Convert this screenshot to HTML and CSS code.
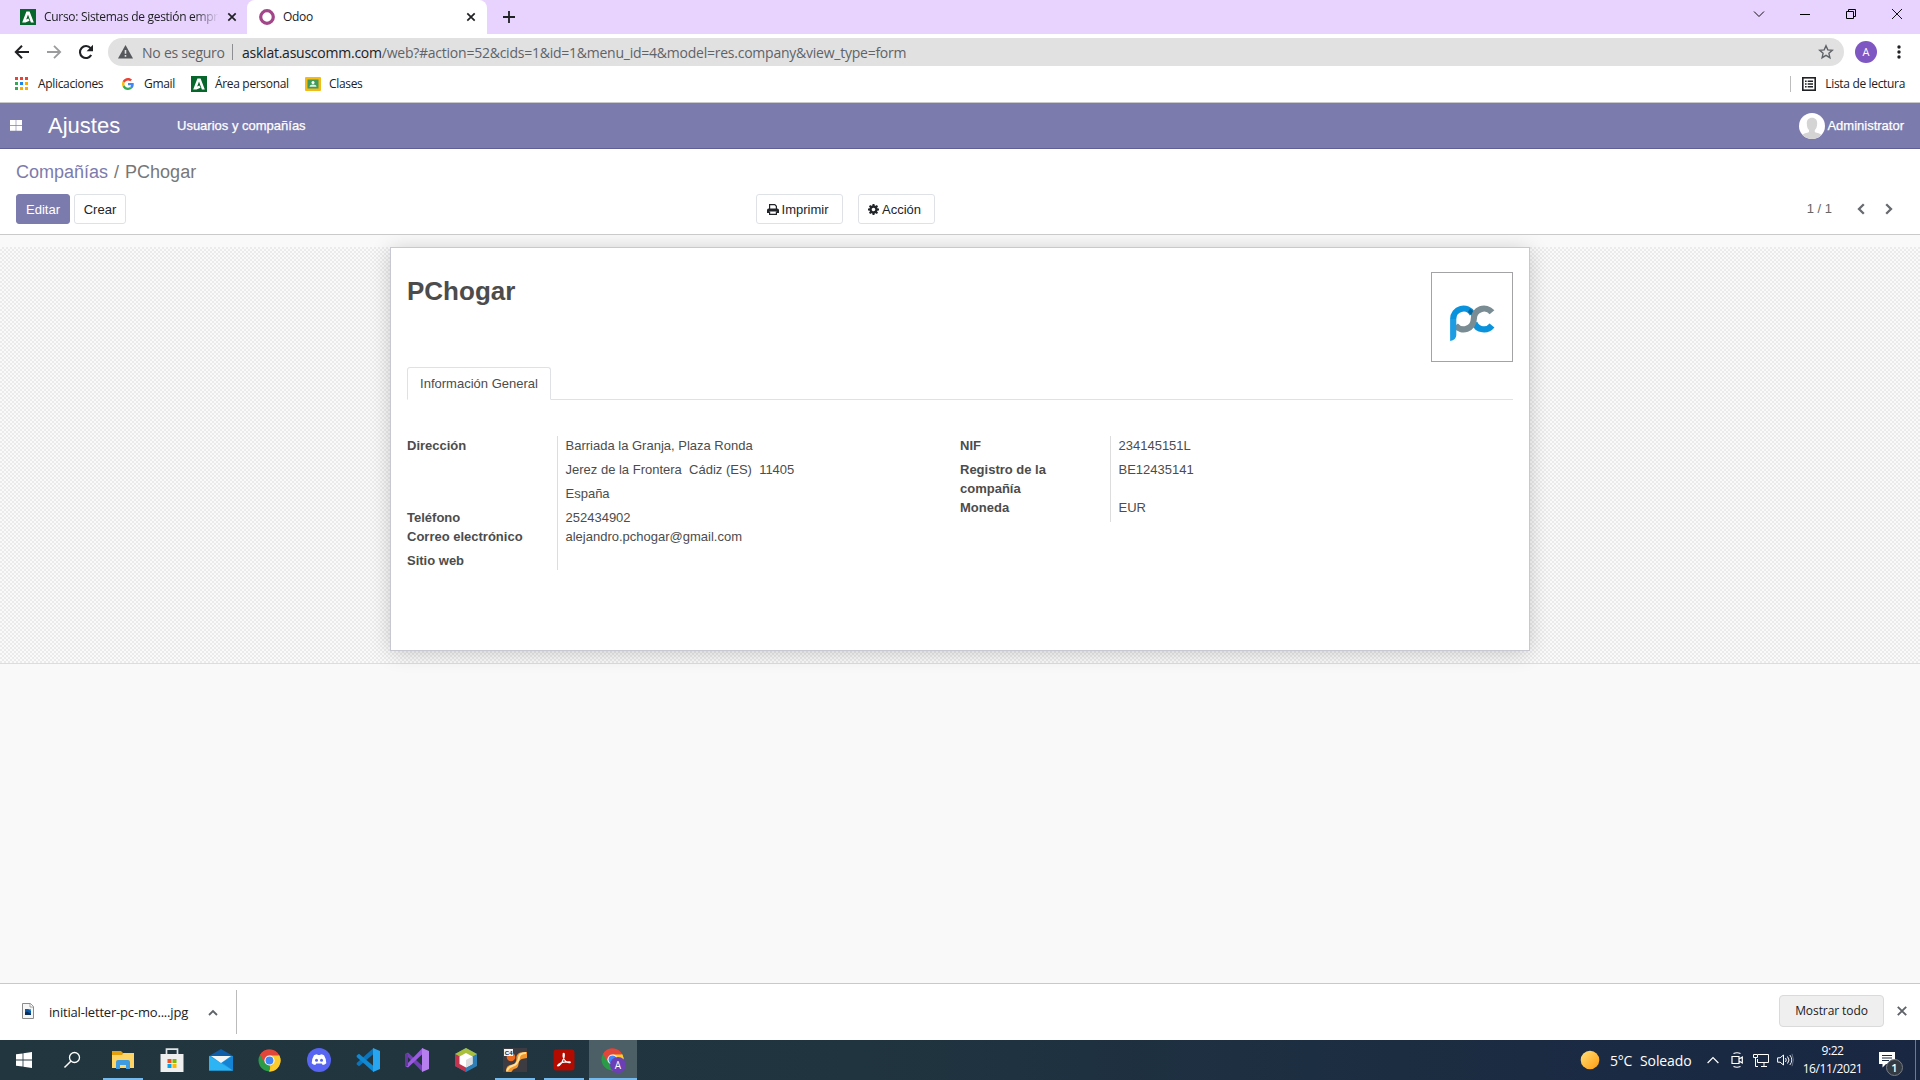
FILE: index.html
```html
<!DOCTYPE html>
<html lang="es">
<head>
<meta charset="utf-8">
<title>Odoo</title>
<link rel="stylesheet" href="styles.css">
</head>
<body>
<svg class="defs" width="0" height="0" aria-hidden="true">
  <defs>
    <symbol id="junta" viewBox="0 0 16 16"><rect width="16" height="16" fill="#07662b"/><path d="M2.2 13.4L6.4 2.6h3.2l4.2 10.8h-2.9L8 5.6l-1.8 4.9 2.1-.9 1.2 2.1-4 1.7z" fill="#fff"/></symbol>
    <symbol id="chrome" viewBox="0 0 48 48"><path d="M24 24L4.1 12.5A23 23 0 0 1 43.9 12.5z" fill="#e33b2e"/><path d="M24 24L43.9 12.5A23 23 0 0 1 24 47z" fill="#fbc116"/><path d="M24 24v23A23 23 0 0 1 4.1 12.5z" fill="#2a9c48"/><path d="M24 13.5h20.4A23 23 0 0 0 4.1 12.5l10.8 17z" fill="#e0463a"/><path d="M33.1 29.2L22.5 47A23 23 0 0 0 44.4 13.5H24z" fill="#fccb2e"/><circle cx="24" cy="24" r="10.6" fill="#fff"/><circle cx="24" cy="24" r="8.3" fill="#4285f4"/></symbol>
    <linearGradient id="sun" x1="0" y1="0" x2="1" y2="1"><stop offset="0" stop-color="#ffe27a"/><stop offset="1" stop-color="#ff9a0c"/></linearGradient>
  </defs>
</svg>
<div class="screen">
  <header class="tabstrip">
    <div class="tab tab-back">
      <svg width="16" height="16"><use href="#junta"/></svg>
      <span class="tab-title fade">Curso: Sistemas de gestión empre</span>
      <svg class="tab-x" width="10" height="10" viewBox="0 0 10 10"><path d="M1.3 1.3l7.4 7.4M8.7 1.3L1.3 8.7" stroke="#202124" stroke-width="1.7"/></svg>
    </div>
    <div class="tab tab-front">
      <svg width="16" height="16" viewBox="0 0 16 16"><circle cx="8" cy="8" r="6.3" fill="none" stroke="#a24689" stroke-width="3.2"/></svg>
      <span class="tab-title">Odoo</span>
      <svg class="tab-x" width="10" height="10" viewBox="0 0 10 10"><path d="M1.3 1.3l7.4 7.4M8.7 1.3L1.3 8.7" stroke="#202124" stroke-width="1.7"/></svg>
    </div>
    <svg class="newtab" width="12" height="12" viewBox="0 0 12 12"><path d="M6 0v12M0 6h12" stroke="#202124" stroke-width="1.8"/></svg>
    <div class="winbtns">
      <svg width="12" height="12" viewBox="0 0 12 12"><path d="M1 3.5l5 5 5-5" fill="none" stroke="#111" stroke-width="1"/></svg>
      <svg width="12" height="12" viewBox="0 0 12 12"><path d="M1 6.5h10" stroke="#000"/></svg>
      <svg width="12" height="12" viewBox="0 0 12 12"><path d="M1.5 3.5h7v7h-7zM3.5 3.5v-2h7v7h-2" fill="none" stroke="#000"/></svg>
      <svg width="12" height="12" viewBox="0 0 12 12"><path d="M1 1l10 10M11 1L1 11" stroke="#111"/></svg>
    </div>
  </header>

  <div class="toolbar">
    <svg width="16" height="16" viewBox="0 0 16 16"><path d="M15 8H2.5M8 1.8L1.8 8 8 14.2" fill="none" stroke="#202124" stroke-width="2"/></svg>
    <svg width="16" height="16" viewBox="0 0 16 16"><path d="M1 8h12.5M8 1.8L14.2 8 8 14.2" fill="none" stroke="#9b9c9e" stroke-width="1.8"/></svg>
    <svg width="16" height="16" viewBox="0 0 16 16"><path d="M13.2 11A6 6 0 1 1 12.6 4.2" fill="none" stroke="#202124" stroke-width="2.1"/><path d="M15 .8v6.4H8.6z" fill="#202124"/></svg>
    <div class="omnibox">
      <svg width="15" height="14" viewBox="0 0 15 14"><path d="M7.5 0L15 13.5H0z" fill="#55585c"/><path d="M7.5 5v3.8M7.5 10v1.8" stroke="#e1e1e1" stroke-width="1.6"/></svg>
      <span class="insecure">No es seguro</span>
      <i class="omni-sep"></i>
      <span class="url"><b>asklat.asuscomm.com</b>/web?#action=52&amp;cids=1&amp;id=1&amp;menu_id=4&amp;model=res.company&amp;view_type=form</span>
      <svg class="star" width="16" height="16" viewBox="0 0 16 16"><path d="M8 1.8l1.8 4.1 4.5.4-3.4 3 1 4.4L8 11.400l-3.900 2.300 1-4.400-3.400-3 4.500-.4z" fill="none" stroke="#5f6368" stroke-width="1.4"/></svg>
    </div>
    <span class="avatar">A</span>
    <svg class="kebab" width="4" height="14" viewBox="0 0 4 14"><g fill="#202124"><circle cx="2" cy="2" r="1.7"/><circle cx="2" cy="7" r="1.7"/><circle cx="2" cy="12" r="1.7"/></g></svg>
  </div>

  <nav class="bookmarks">
    <svg class="bm1" width="13" height="13" viewBox="0 0 13 13"><path d="M0 0h3v3H0zM5 0h3v3H5zM10 0h3v3h-3z" fill="#ea4335"/><path d="M0 5h3v3H0zM0 10h3v3H0z" fill="#34a853"/><path d="M5 5h3v3H5z" fill="#1a86e8"/><path d="M10 5h3v3h-3zM5 10h3v3H5zM10 10h3v3h-3z" fill="#f9ab00"/></svg>
    <span class="t-apps">Aplicaciones</span>
    <svg class="bm2" width="12" height="12" viewBox="0 0 48 48"><path fill="#EA4335" d="M24 9.500c3.500 0 6.700 1.200 9.200 3.600l6.900-6.900C35.900 2.400 30.500 0 24 0 14.600 0 6.500 5.400 2.600 13.200l8 6.200C12.400 13.700 17.700 9.500 24 9.500z"/><path fill="#4285F4" d="M47 24.600c0-1.600-.2-3.100-.4-4.600H24v9h12.900c-.6 3-2.200 5.500-4.700 7.200l7.700 6C44.400 38 47 31.800 47 24.600z"/><path fill="#FBBC05" d="M10.500 28.600c-.5-1.500-.8-3-.8-4.600s.3-3.100.8-4.600l-8-6.200C.9 16.500 0 20.100 0 24s.9 7.500 2.600 10.800z"/><path fill="#34A853" d="M24 48c6.500 0 11.900-2.100 15.900-5.800l-7.700-6c-2.200 1.500-4.900 2.300-8.200 2.300-6.300 0-11.600-4.200-13.500-9.900l-8 6.200C6.500 42.600 14.600 48 24 48z"/></svg>
    <span class="t-gmail">Gmail</span>
    <svg class="bm3" width="16" height="16"><use href="#junta"/></svg>
    <span class="t-area">Área personal</span>
    <svg class="bm4" width="16" height="14" viewBox="0 0 16 14"><rect width="16" height="14" rx="1" fill="#f5ba15"/><rect x="2.500" y="2.500" width="11" height="9" fill="#3f9a5c"/><circle cx="8" cy="5.500" r="1.500" fill="#fff"/><path d="M4.500 9.800c0-3.200 7-3.200 7 0z" fill="#e5f3ea"/></svg>
    <span class="t-clases">Clases</span>
    <div class="reading">
      <svg width="14" height="14" viewBox="0 0 14 14"><rect x=".8" y=".8" width="12.400" height="12.400" fill="none" stroke="#202124" stroke-width="1.600"/><path d="M3 4.200h1.600M3 7h1.600M3 9.800h1.600M5.700 4.200H11M5.700 7H11M5.700 9.800H11" stroke="#202124" stroke-width="1.400"/></svg>
      <span class="t-lista">Lista de lectura</span>
    </div>
  </nav>

  <nav class="odoo-nav">
    <svg width="12" height="11" viewBox="0 0 12 11"><path d="M0 0h5.700v5H0zM6.300 0H12v5H6.300zM0 5.700h5.700v5H0zM6.300 5.700H12v5H6.300z" fill="#fff"/></svg>
    <span class="brand">Ajustes</span>
    <span class="menu">Usuarios y compañías</span>
    <div class="user">
      <svg width="26" height="26" viewBox="0 0 26 26"><clipPath id="uc"><circle cx="13" cy="13" r="13"/></clipPath><g clip-path="url(#uc)"><rect width="26" height="26" fill="#fff"/><path d="M13 4.800c3.400 0 5.200 2.200 5.200 5.600 0 3-1 5.200-2.400 6.600v2c2 1.200 6 1 7 4v3H3v-3c1-3 5-2.800 7-4v-2C8.600 15.600 7.800 13.400 7.800 10.400c0-3.400 1.800-5.600 5.200-5.600z" fill="#d4d4d4"/></g></svg>
      <span>Administrator</span>
    </div>
  </nav>

  <section class="control">
    <div class="crumbs"><a>Compañías</a> <span class="slash">/</span> PChogar</div>
    <div class="actions">
      <button class="btn primary">Editar</button>
      <button class="btn create">Crear</button>
      <button class="btn print"><svg width="12" height="11" viewBox="0 0 12 11"><path d="M2.600 5V.7h5.200l1.600 1.600V5" fill="none" stroke="#212529" stroke-width="1.200"/><path d="M0 9V6.200Q0 4.600 1.600 4.600h8.800Q12 4.600 12 6.200V9H9.800V7.600H2.200V9z" fill="#212529"/><path d="M2.600 7.600v2.700h6.800V7.600" fill="none" stroke="#212529" stroke-width="1.200"/></svg>Imprimir</button>
      <button class="btn act"><svg width="11" height="11" viewBox="0 0 11 11"><circle cx="5.500" cy="5.500" r="3" fill="none" stroke="#212529" stroke-width="2.400"/><path d="M5.500 0v2M5.500 9v2M0 5.500h2M9 5.500h2M1.600 1.600L3 3M8 8l1.400 1.400M1.600 9.400L3 8M8 3l1.400-1.400" stroke="#212529" stroke-width="2"/></svg>Acción</button>
      <div class="pager">
        <span>1 / 1</span>
        <svg width="8" height="12" viewBox="0 0 8 12"><path d="M6.800 1.200L2 6l4.800 4.800" fill="none" stroke="#666a6f" stroke-width="2.300"/></svg>
        <svg width="8" height="12" viewBox="0 0 8 12"><path d="M1.200 1.200L6 6l-4.800 4.800" fill="none" stroke="#666a6f" stroke-width="2.300"/></svg>
      </div>
    </div>
  </section>

  <main class="content">
    <div class="form-bg">
      <article class="sheet">
        <div class="sheet-top">
          <h1>PChogar</h1>
          <div class="logo">
            <svg width="48" height="40" viewBox="0 0 48 40" fill="none" stroke-width="6.200">
              <path d="M25.400 19A10.300 10.300 0 0 0 43 21.500" stroke="#0a93dc"/>
              <path d="M4.200 15A10.300 10.300 0 0 1 23.500 9.900" stroke="#0a93dc"/>
              <path d="M20 6.300q4 2.600 5 7" stroke="#0b6498" stroke-width="4"/>
              <path d="M6.500 21.500A10.300 10.300 0 0 0 24.800 15A10.300 10.300 0 0 1 43 8.300" stroke="#7a8c93"/>
              <path d="M1.100 15h6.200v16q0 5-6.200 6z" fill="#1c9ce2" stroke="none"/>
            </svg>
          </div>
        </div>
        <div class="nbtabs"><span class="nbtab">Información General</span></div>
        <div class="groups">
          <dl class="group left">
            <dt>Dirección</dt>
            <dd class="address"><span>Barriada la Granja, Plaza Ronda</span><span>Jerez de la Frontera&nbsp; Cádiz (ES)&nbsp; 11405</span><span>España</span></dd>
            <dt>Teléfono</dt><dd>252434902</dd>
            <dt>Correo electrónico</dt><dd>alejandro.pchogar@gmail.com</dd>
            <dt>Sitio web</dt><dd></dd>
          </dl>
          <dl class="group right">
            <dt>NIF</dt><dd>234145151L</dd>
            <dt>Registro de la compañía</dt><dd>BE12435141</dd>
            <dt>Moneda</dt><dd>EUR</dd>
          </dl>
        </div>
      </article>
    </div>
  </main>

  <div class="downloads">
    <svg class="file" width="12" height="16" viewBox="0 0 12 16"><path d="M.5.500h8l3 3v12H.5z" fill="#f6f6f6" stroke="#8b8b8b"/><path d="M8 .5v3.500h3.500" fill="#fff" stroke="#8b8b8b" stroke-width=".8"/><rect x="3" y="6" width="6" height="6" fill="#0d59a8"/><path d="M3 9.500l2 -1 4 2.500v1H3z" fill="#0a2d5c"/><path d="M6 6h3v2z" fill="#43a6e8"/></svg>
    <span class="fname">initial-letter-pc-mo....jpg</span>
    <svg class="caret" width="10" height="7" viewBox="0 0 10 7"><path d="M1 6l4-4 4 4" fill="none" stroke="#5f6368" stroke-width="1.800"/></svg>
    <i class="dsep"></i>
    <span class="showall">Mostrar todo</span>
    <svg class="dclose" width="10" height="10" viewBox="0 0 10 10"><path d="M.8.800l8.400 8.400M9.200.800L.8 9.200" stroke="#5f6368" stroke-width="1.900"/></svg>
  </div>

  <footer class="taskbar">
    <span class="app start"><svg width="16" height="16" viewBox="0 0 16 16"><path d="M0 2.300l6.600-.9v6.200H0zM7.400 1.300L16 0v7.600H7.400zM0 8.400h6.600v6.200L0 13.700zM7.400 8.400H16V16l-8.600-1.300z" fill="#fff"/></svg></span>
    <span class="app find"><svg width="18" height="18" viewBox="0 0 18 18"><circle cx="11.500" cy="6.500" r="5" fill="none" stroke="#fff" stroke-width="1.300"/><path d="M7.800 10.200L1.500 16.500" stroke="#fff" stroke-width="1.500"/></svg></span>
    <span class="app run"><svg width="24" height="22" viewBox="0 0 24 22"><path d="M1 2h9l2 2h11v15H1z" fill="#e5a00d"/><path d="M1 6h10l1.500-2H23v15H1z" fill="#ffd566"/><path d="M5 20v-7q0-2 2-2h10q2 0 2 2v7h-4v-4H9v4z" fill="#3f9be0"/></svg></span>
    <span class="app"><svg width="24" height="24" viewBox="0 0 24 24"><path d="M6.500 7V1.200h11V7" fill="none" stroke="#dfe4e6" stroke-width="1.700"/><path d="M.5 6h23v18h-23z" fill="#efefef"/><path d="M7.500 11h4v4h-4z" fill="#f05022"/><path d="M12.500 11h4v4h-4z" fill="#7fba00"/><path d="M7.500 16h4v4h-4z" fill="#00a4ef"/><path d="M12.500 16h4v4h-4z" fill="#ffb900"/></svg></span>
    <span class="app"><svg width="24" height="24" viewBox="0 0 24 24"><path d="M0 8l12-7 12 7z" fill="#0f5ca8"/><path d="M0 8h24v14.500H0z" fill="#1f9ce8"/><path d="M0 8l24 14.500H0z" fill="#2cb4f4"/><path d="M24 8L13 14.500l11 8z" fill="#1583d4"/><path d="M2 8h20l-10 7z" fill="#f4f4f4"/></svg></span>
    <span class="app"><svg width="23" height="23"><use href="#chrome"/></svg></span>
    <span class="app"><svg width="24" height="24" viewBox="0 0 24 24"><circle cx="12" cy="12" r="12" fill="#5865f2"/><path d="M7 7.200q2-1 3.200-1l.5.900h2.600l.5-.9q1.200 0 3.200 1 2.500 4 2.300 8-1.700 1.500-3.600 1.800l-.9-1.500H9.200L8.300 17q-1.900-.3-3.600-1.800-.2-4 2.300-8z" fill="#fff"/><circle cx="9.500" cy="12.300" r="1.500" fill="#5865f2"/><circle cx="14.500" cy="12.300" r="1.500" fill="#5865f2"/></svg></span>
    <span class="app"><svg width="24" height="24" viewBox="0 0 24 24"><path d="M17.500 0v6L3 18.200l-2.300-1.700V15z" fill="#0a75bd"/><path d="M17.500 24v-6L3 5.800.7 7.500V9z" fill="#1088d2"/><path d="M17 0l7 3v18l-7 3z" fill="#27a5f1"/></svg></span>
    <span class="app"><svg width="24" height="24" viewBox="0 0 24 24"><path d="M0 6l3-1.500L17.500 18v6z" fill="#7340b8"/><path d="M0 18l3 1.500L17.500 6V0z" fill="#9b5be0"/><path d="M0 6h3v12H0z" fill="#66379f"/><path d="M17 0l7 3v18l-7 3z" fill="#b57ff0"/></svg></span>
    <span class="app"><svg width="22" height="24" viewBox="0 0 22 24"><path d="M11 0l11 6v12l-11 6L0 18V6z" fill="#2f7db5"/><path d="M0 6L11 0l11 6-11 6z" fill="#a9c03c"/><path d="M0 6l11 6v12L0 18z" fill="#c2344d"/><path d="M11 5l6.500 3.500v7.500L11 19.500 4.500 16V8.500z" fill="#fff"/><path d="M11 12l6.500-3.500v7.500L11 19.500z" fill="#dcdcdc"/></svg></span>
    <span class="app run"><svg width="24" height="24" viewBox="0 0 24 24"><rect width="24" height="24" fill="#3d3c43"/><circle cx="8" cy="9" r="4.300" fill="#ea6a1f"/><path d="M24 4v6c-4 .5-7 1-8 4-1 3 0 6-5 7-2 1-2 3-3 3H3c0-4 1-6 4-7 4-.5 5-1 6-4 1-3-1-5 3-8 2-1 5-1 8-1z" fill="#f5952a"/><path d="M23 5c-5 0-7 2-7 5-1 5-3 7-7 8-3 1-4 2-5 5" fill="none" stroke="#ffe19a" stroke-width="2"/><rect x="1" y="1" width="9" height="7" fill="#f5f5f5"/><text x="1.800" y="6.600" class="tiny">C4</text></svg></span>
    <span class="app run"><svg width="22" height="22" viewBox="0 0 22 22"><rect x=".5" y=".5" width="21" height="21" rx="3" fill="#b30b00"/><path d="M4.500 16.500c2-3 6-4 12.500-3.600 1 1-1.500 1.200-3.500.1-2.500-2-4-5-3.200-8.500 1.200-.6 1.200 1.500.7 4-1 3.500-3 6.500-4.800 8-.8.500-1.700.4-1.700 0z" fill="none" stroke="#fff" stroke-width="1.200"/></svg></span>
    <span class="app active"><svg width="26" height="26" viewBox="0 0 26 26"><use href="#chrome" x="1" y="1" width="23" height="23"/><circle cx="18" cy="18" r="8" fill="#6b3fb5"/><text x="18" y="21.500" text-anchor="middle" class="badge-a">A</text></svg></span>

    <div class="tray">
      <svg class="sun" width="20" height="20" viewBox="0 0 20 20"><circle cx="10" cy="10" r="9.300" fill="url(#sun)"/></svg>
      <span class="temp">5°C</span><span class="cond">Soleado</span>
      <svg class="up" width="12" height="8" viewBox="0 0 12 8"><path d="M.6 7L6 1.500 11.400 7" fill="none" stroke="#fff" stroke-width="1.200"/></svg>
      <svg class="cam" width="12" height="16" viewBox="0 0 12 16"><path d="M1 4.500h7v7H1zM8 7l3.300-2v6L8 9M2.500 1.500Q6 0 9.500 1.500M2.500 14.500q3.500 1.500 7 0" fill="none" stroke="#fff" stroke-width="1.200"/></svg>
      <svg class="net" width="16" height="14" viewBox="0 0 16 14"><path d="M5 1.500h10.500v8H4.500V6M8 13.500h6M11 9.500v4M.5 1.500h4v3h-4zM2.500 5v8.500H5" fill="none" stroke="#fff"/></svg>
      <svg class="vol" width="17" height="14" viewBox="0 0 17 14"><path d="M.6 4.800h2.500L6.500 2v10L3.100 9.200H.6zM8.500 5q1.500 2 0 4M10.500 3.500q3 3.500 0 7" fill="none" stroke="#fff"/><path d="M12.800 2q4 5 0 10" fill="none" stroke="#fff" stroke-width=".9"/><path d="M15 .8q3 6 0 12.400" fill="none" stroke="#6a7588" stroke-width=".9"/></svg>
      <div class="clock"><span>9:22</span><span class="date">16/11/2021</span></div>
      <div class="notif"><svg width="16" height="16" viewBox="0 0 16 16"><path d="M0 0h16v12h-9l-3.500 3.500V12H0z" fill="#fff"/><path d="M3 3.500h10M3 6h10M3 8.500h7" stroke="#1b2941" stroke-width="1.100"/></svg><b>1</b></div>
      <i class="peek"></i>
    </div>
  </footer>
</div>
</body>
</html>
```
FILE: styles.css
```css
* { box-sizing: border-box; }
body { margin: 0; font-family: "Liberation Sans", Arial, sans-serif; font-size: 13px; color: #4c4c4c; overflow: hidden; }
svg { display: block; flex: none; }
.defs { position: absolute; }
.screen { width: 1920px; height: 1080px; display: flex; flex-direction: column; overflow: hidden; background: #f9f9f9; }
.screen > * { flex: none; }
.tabstrip, .toolbar, .bookmarks, .downloads, .taskbar { font-family: "Open Sans", "Noto Sans", sans-serif; white-space: nowrap; }

/* Browser tabs */
.tabstrip { height: 34px; background: #e8d3ff; display: flex; align-items: center; color: #202124; font-size: 12px; letter-spacing: -0.3px; }
.tab { height: 34px; display: flex; align-items: center; }
.tab-back { width: 247px; padding-left: 20px; gap: 8px; background: #e8d3ff; }
.tab-front { width: 240px; padding: 0 11px 0 12px; gap: 8px; background: #fff; border-radius: 8px 8px 0 0; }
.tab-title { flex: none; line-height: 20px; }
.fade { width: 175px; overflow: hidden; mask-image: linear-gradient(90deg, #000 86%, transparent 100%); }
.tab-front .tab-x { margin-left: auto; }
.newtab { margin-left: 16px; }
.winbtns { margin-left: auto; display: flex; gap: 34px; padding: 0 17px 6px 0; }

/* Address bar */
.toolbar { height: 36px; background: #fff; display: flex; align-items: center; padding: 0 20px 0 14px; gap: 16px; }
.omnibox { height: 28px; width: 1736px; flex: none; margin-left: -2px; border-radius: 14px; background: #e1e1e1; display: flex; align-items: center; padding: 0 10px; font-size: 14px; letter-spacing: -0.24px; color: #5f6368; }
.insecure { margin-left: 9px; width: 89px; }
.omni-sep { width: 1px; height: 16px; background: #8c8e91; margin: 0 9px 0 1px; }
.url b { font-weight: 400; color: #202124; }
.star { margin-left: auto; }
.avatar { width: 22px; height: 22px; margin-left: -5px; border-radius: 50%; background: #7e57c2; color: #fff; font-size: 11px; line-height: 22px; text-align: center; flex: none; }
.kebab { margin-left: 4px; }

/* Bookmarks */
.bookmarks { height: 33px; background: #fff; border-bottom: 1px solid #c9c9cb; display: flex; align-items: center; padding: 0 15px 5px 15px; font-size: 12px; color: #202124; letter-spacing: -0.33px; }
.t-apps { margin-left: 10px; width: 84px; }
.t-gmail { margin-left: 10px; width: 47px; }
.t-area { margin-left: 8px; width: 90px; }
.t-clases { margin-left: 8px; }
.reading { margin-left: auto; display: flex; align-items: center; height: 16px; border-left: 1px solid #bdbdbd; padding-left: 11px; gap: 9px; }

/* Application bar */
.odoo-nav { height: 46px; background: #7c7bad; border-bottom: 1px solid #5f5e97; display: flex; align-items: center; color: #fff; padding: 0 16px 0 10px; }
.brand { margin-left: 26px; width: 129px; font-size: 22px; }
.menu { -webkit-text-stroke: 0.25px #fff; }
.user { margin-left: auto; display: flex; align-items: center; gap: 2px; -webkit-text-stroke: 0.25px #fff; }

/* Control panel */
.control { height: 86px; background: #fff; border-bottom: 1px solid #cacaca; padding: 11px 27px 0 16px; }
.crumbs { font-size: 18px; line-height: 24px; color: #777; }
.crumbs a { color: #7c7bad; }
.slash { margin: 0 1px; }
.actions { display: flex; align-items: center; margin-top: 10px; }
.btn { height: 30px; padding: 1px 0 0; border: 1px solid #dee2e6; border-radius: 3px; background: #fff; color: #212529; font: 13px/20px "Liberation Sans", Arial, sans-serif; display: flex; align-items: center; justify-content: center; gap: 3px; }
.primary { width: 54px; background: #7c7bad; border-color: #7c7bad; color: #fff; }
.create { width: 52px; margin-left: 4px; }
.print { width: 87px; margin-left: 630px; padding-right: 4px; }
.act { width: 77px; margin-left: 15px; padding-right: 4px; }
.pager { margin-left: auto; display: flex; align-items: center; color: #666; gap: 20px; }
.pager span { margin: 0 5px 2px 0; }

/* Form */
.content { height: 748px; background: #f9f9f9; padding-top: 12px; overflow: hidden; }
.form-bg { height: 417px; border-bottom: 1px solid #ddd; background: repeating-conic-gradient(#ebebeb 0 25%, #fafafa 0 50%) 0 0 / 4px 4px; display: flex; justify-content: center; align-items: flex-start; }
.sheet { width: 1140px; height: 404px; background: #fff; border: 1px solid #c8c8d3; box-shadow: 0 2px 20px -1px rgba(0,0,0,.2); padding: 24px 16px; }
.sheet-top { display: flex; justify-content: space-between; height: 95px; }
h1 { margin: 1px 0 0; font-size: 26px; line-height: 36px; }
.logo { width: 82px; height: 90px; border: 1px solid #a3a3a6; padding: 31px 0 0 17px; }
.nbtabs { height: 33px; border-bottom: 1px solid #dee2e6; display: flex; }
.nbtab { width: 144px; height: 33px; border: 1px solid #dee2e6; border-bottom-color: #fff; border-radius: 3px 3px 0 0; text-align: center; line-height: 31px; background: #fff; }
.groups { display: grid; grid-template-columns: 553px 553px; margin-top: 36px; }
.group { margin: 0; display: grid; grid-template-columns: 150px 1fr; align-content: start; }
.left { height: 134px; grid-template-rows: 72px 19px 24px 19px; }
.right { height: 86px; grid-template-rows: 24px 38px 24px; }
dt { font-weight: 700; line-height: 19px; padding-right: 40px; white-space: nowrap; }
.right dt { white-space: normal; }
dd { margin: 0; border-left: 1px solid #ddd; padding-left: 7.5px; line-height: 19px; }
.address { display: flex; flex-direction: column; gap: 5px; }

/* Downloads */
.downloads { height: 57px; background: #fff; border-top: 1px solid #c9c9c9; display: flex; align-items: center; color: #202124; font-size: 13px; padding-right: 13px; }
.file { margin: 0 0 2px 22px; }
.fname { margin-left: 15px; width: 159px; letter-spacing: -0.18px; }
.dsep { width: 1px; height: 44px; background: #bbb; margin-left: 18px; }
.showall { margin-left: auto; width: 105px; height: 32px; border: 1px solid #dadada; border-radius: 4px; background: #efefef; text-align: center; line-height: 30px; font-size: 12px; letter-spacing: -0.08px; margin-bottom: 2px; }
.dclose { margin: 0 0 2px 13px; }

/* Taskbar */
.taskbar { height: 40px; background: linear-gradient(90deg, #22363f 0%, #20343f 45%, #1b2b42 80%, #192742 100%); display: flex; color: #fff; }
.app { width: 49px; height: 40px; display: flex; align-items: center; justify-content: center; }
.start { padding-right: 2px; }
.find { padding-right: 4px; }
.app.run { background: linear-gradient(#76b9ed, #76b9ed) center bottom / 40px 2px no-repeat; }
.app.active { background: linear-gradient(#76b9ed, #76b9ed) center bottom / 48px 2px no-repeat, linear-gradient(#4c5e66, #4c5e66) center / 48px 40px no-repeat; }
.tiny { font: bold 6px "Liberation Sans", sans-serif; fill: #222; }
.badge-a { font: 10px "Open Sans", sans-serif; fill: #fff; }
.tray { margin-left: auto; display: flex; align-items: center; height: 40px; }
.temp { margin-left: 10px; font-size: 14px; letter-spacing: -0.2px; width: 30px; }
.cond { font-size: 14px; letter-spacing: -0.1px; width: 50px; }
.up { margin-left: 17px; }
.cam { margin-left: 12px; }
.net { margin-left: 10px; }
.vol { margin-left: 8px; }
.clock { width: 77px; text-align: center; font-size: 12px; line-height: 18px; letter-spacing: -0.4px; display: flex; flex-direction: column; }
.notif { position: relative; margin-left: 8px; }
.notif b { position: absolute; left: 7px; top: 7px; width: 17px; height: 17px; border-radius: 50%; background: #343a42; border: 1px solid #777d86; font-size: 11px; line-height: 15px; text-align: center; font-weight: 600; }
.peek { width: 1px; height: 40px; background: #6f7a8c; margin: 0 4px 0 20px; }
```
